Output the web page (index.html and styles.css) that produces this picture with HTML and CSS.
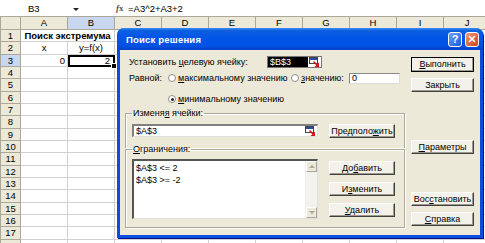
FILE: index.html
```html
<!DOCTYPE html>
<html lang="ru">
<head>
    <meta charset="UTF-8">
    <title>Поиск решения</title>
    <link rel="stylesheet" href="styles.css">
</head>
<body>
    <div class="fbar">
        <div class="namebox">B3<span class="dd"></span></div>
        <div class="fx"><i>f</i>x</div>
        <div class="formula">=A3^2+A3+2</div>
    </div>

    <div class="sheet-wrap">
    <table class="sheet">
        <colgroup><col class="rh"><col span="10" class="c"></colgroup>
        <tr class="colhead"><th></th><th>A</th><th class="sel">B</th><th>C</th><th>D</th><th>E</th><th>F</th><th>G</th><th>H</th><th>I</th><th>J</th></tr>
        <tr><th>1</th><td colspan="2" class="bold">Поиск экстремума</td><td></td><td></td><td></td><td></td><td></td><td></td><td></td><td></td></tr>
        <tr><th>2</th><td class="mid">x</td><td class="mid">y=f(x)</td><td></td><td></td><td></td><td></td><td></td><td></td><td></td><td></td></tr>
        <tr><th class="sel">3</th><td class="num">0</td><td class="num active">2<span class="handle"></span></td><td></td><td></td><td></td><td></td><td></td><td></td><td></td><td></td></tr>
        <tr><th>4</th><td></td><td></td><td></td><td></td><td></td><td></td><td></td><td></td><td></td><td></td></tr>
        <tr><th>5</th><td></td><td></td><td></td><td></td><td></td><td></td><td></td><td></td><td></td><td></td></tr>
        <tr><th>6</th><td></td><td></td><td></td><td></td><td></td><td></td><td></td><td></td><td></td><td></td></tr>
        <tr><th>7</th><td></td><td></td><td></td><td></td><td></td><td></td><td></td><td></td><td></td><td></td></tr>
        <tr><th>8</th><td></td><td></td><td></td><td></td><td></td><td></td><td></td><td></td><td></td><td></td></tr>
        <tr><th>9</th><td></td><td></td><td></td><td></td><td></td><td></td><td></td><td></td><td></td><td></td></tr>
        <tr><th>10</th><td></td><td></td><td></td><td></td><td></td><td></td><td></td><td></td><td></td><td></td></tr>
        <tr><th>11</th><td></td><td></td><td></td><td></td><td></td><td></td><td></td><td></td><td></td><td></td></tr>
        <tr><th>12</th><td></td><td></td><td></td><td></td><td></td><td></td><td></td><td></td><td></td><td></td></tr>
        <tr><th>13</th><td></td><td></td><td></td><td></td><td></td><td></td><td></td><td></td><td></td><td></td></tr>
        <tr><th>14</th><td></td><td></td><td></td><td></td><td></td><td></td><td></td><td></td><td></td><td></td></tr>
        <tr><th>15</th><td></td><td></td><td></td><td></td><td></td><td></td><td></td><td></td><td></td><td></td></tr>
        <tr><th>16</th><td></td><td></td><td></td><td></td><td></td><td></td><td></td><td></td><td></td><td></td></tr>
        <tr><th>17</th><td></td><td></td><td></td><td></td><td></td><td></td><td></td><td></td><td></td><td></td></tr>
        <tr><th></th><td></td><td></td><td></td><td></td><td></td><td></td><td></td><td></td><td></td><td></td></tr>
    </table>
    </div>

    <div class="dialog">
        <div class="titlebar">
            <span class="title">Поиск решения</span>
            <span class="tb-btn help">?</span>
            <span class="tb-btn close">
                <svg width="8" height="8" viewBox="0 0 8 8"><path d="M1 1 L7 7 M7 1 L1 7" stroke="#fff" stroke-width="1.6"/></svg>
            </span>
        </div>

        <div class="dlg-body">
            <div class="main">
                <div class="row">
                    <span class="lbl target-lbl">Установить <u>ц</u>елевую ячейку:</span>
                    <span class="refedit target">
                        <span class="val selected">$B$3</span>
                        <svg class="ref-icon" width="11" height="10" viewBox="0 0 11 10"><rect x="0.5" y="0.5" width="8" height="6" fill="#fff" stroke="#444"/><rect x="1" y="1" width="7" height="2" fill="#2a4aa8"/><path d="M4.5 4.5 L8.5 8.5" stroke="#e01010" stroke-width="1.4"/><path d="M10 5.5 V10 H5.5 Z" fill="#e01010"/></svg>
                    </span>
                </div>

                <div class="row eq">
                    <span class="lbl eq-lbl">Равной:</span>
                    <span class="opt opt-max"><span class="radio"></span><span><u>м</u>аксимальному значению</span></span>
                    <span class="opt opt-val"><span class="radio"></span><span><u>з</u>начению:</span></span>
                    <span class="field value">0</span>
                </div>

                <div class="row min">
                    <span class="opt"><span class="radio on"></span><span><u>м</u>инимальному значению</span></span>
                </div>

                <fieldset class="group changing">
                    <legend>Изменя<u>я</u> ячейки:</legend>
                    <div class="group-row">
                        <span class="refedit cells">
                            <span class="val">$A$3</span>
                            <svg class="ref-icon" width="11" height="10" viewBox="0 0 11 10"><rect x="0.5" y="0.5" width="8" height="6" fill="#fff" stroke="#444"/><rect x="1" y="1" width="7" height="2" fill="#2a4aa8"/><path d="M4.5 4.5 L8.5 8.5" stroke="#e01010" stroke-width="1.4"/><path d="M10 5.5 V10 H5.5 Z" fill="#e01010"/></svg>
                        </span>
                        <button class="btn mid-btn">Предполо<u>ж</u>ить</button>
                    </div>
                </fieldset>

                <fieldset class="group limits">
                    <legend><u>О</u>граничения:</legend>
                    <div class="group-row">
                        <div class="listbox">
                            <div class="items">
                                <div>$A$3 &lt;= 2</div>
                                <div>$A$3 &gt;= -2</div>
                            </div>
                            <div class="scroll">
                                <span class="arrow up"></span>
                                <span class="arrow down"></span>
                            </div>
                        </div>
                        <div class="mid-col">
                            <button class="btn mid-btn">До<u>б</u>авить</button>
                            <button class="btn mid-btn">И<u>з</u>менить</button>
                            <button class="btn mid-btn"><u>У</u>далить</button>
                        </div>
                    </div>
                </fieldset>
            </div>

            <div class="side">
                <button class="btn default run"><u>В</u>ыполнить</button>
                <button class="btn close-btn">Закрыть</button>
                <button class="btn params"><u>П</u>араметры</button>
                <button class="btn restore">Вос<u>с</u>тановить</button>
                <button class="btn help-btn"><u>С</u>правка</button>
            </div>
        </div>
    </div>
</body>
</html>
```

FILE: styles.css
```css
body {
    margin: 0;
    width: 485px;
    height: 243px;
    overflow: hidden;
    position: relative;
    background: #fff;
    font-family: "Liberation Sans", Arial, sans-serif;
    font-size: 9.5px;
    color: #000;
}

/* formula bar */

.fbar {
    display: flex;
    align-items: center;
    height: 16px;
    background: #fff;
}

.namebox {
    width: 82px;
    display: flex;
    align-items: center;
    padding-left: 28px;
    box-sizing: border-box;
    position: relative;
}

.dd {
    position: absolute;
    left: 73px;
    top: 5px;
    border-left: 3px solid transparent;
    border-right: 3px solid transparent;
    border-top: 3px solid #222;
}

.fx {
    margin-left: 34px;
    width: 12px;
    font-family: "Liberation Serif", serif;
    font-size: 9px;
    font-weight: bold;
    color: #555;
}

/* sheet */

.sheet-wrap {
    height: 227px;
    overflow: hidden;
}

.sheet {
    border-collapse: collapse;
    table-layout: fixed;
    width: 490px;
}

.sheet col.rh {
    width: 20px;
}

.sheet col.c {
    width: 47px;
}

.sheet tr {
    height: 12px;
}

/* rows are 12.4px in the original, so every third one is a pixel taller */
.sheet tr:nth-child(3n) {
    height: 13px;
}

.sheet tr.colhead {
    height: 13px;
}

.sheet th,
.sheet td {
    padding: 0 2px;
    line-height: 10px;
    font-size: 9.5px;
    white-space: nowrap;
    overflow: visible;
}

.sheet th {
    font-weight: normal;
    background: #ece9d8;
    border: 1px solid #aca899;
    text-align: center;
}

.sheet th.sel {
    background: #c9d6ef;
}

.sheet td {
    border: 1px solid #d0d0d0;
}

.sheet td.bold {
    font-weight: bold;
    text-align: center;
}

.sheet td.mid {
    text-align: center;
}

.sheet td.num {
    text-align: right;
}

.sheet td.active {
    position: relative;
    outline: 2px solid #000;
    outline-offset: -2px;
    padding-right: 4px;
}

.handle {
    position: absolute;
    right: -3px;
    bottom: -3px;
    width: 4px;
    height: 4px;
    background: #000;
    border: 1px solid #fff;
}

/* dialog */

.dialog {
    position: absolute;
    left: 117px;
    top: 28px;
    width: 366px;
    height: 210px;
    box-sizing: border-box;
    border: 3px solid #0a4ddf;
    border-top: 0;
    border-radius: 7px 7px 0 0;
    background: #ece9d8;
    box-shadow: 1px 1px 0 #00148c;
    font-size: 9px;
}

.titlebar {
    height: 22px;
    margin: 0 -3px;
    padding: 0 4px 0 9px;
    display: flex;
    align-items: center;
    gap: 3px;
    border-radius: 7px 7px 0 0;
    background: linear-gradient(#3d8ef8 0%, #0b5fe0 12%, #0055e8 45%, #0052e3 80%, #0241c8 100%);
}

.title {
    flex: 1;
    color: #fff;
    font-weight: bold;
    font-size: 9.5px;
    letter-spacing: 0.2px;
}

.tb-btn {
    width: 12px;
    height: 13px;
    border: 1px solid #fff;
    border-radius: 3px;
    display: flex;
    align-items: center;
    justify-content: center;
    color: #fff;
    font-weight: bold;
    font-size: 11px;
}

.tb-btn.help {
    background: linear-gradient(135deg, #6aa2fa, #1a57e0);
}

.tb-btn.close {
    background: linear-gradient(135deg, #ef9a78, #d2401c);
}

.dlg-body {
    display: grid;
    grid-template-columns: 280px 63px;
    column-gap: 6px;
    padding: 6px 6px 0 5px;
}

.row {
    display: flex;
    align-items: center;
    height: 12px;
}

.lbl {
    box-sizing: border-box;
    padding-left: 4px;
}

.target-lbl {
    width: 142px;
}

.refedit {
    display: flex;
    align-items: center;
    box-sizing: border-box;
    background: #fff;
    border: 1px solid #7f9db9;
}

.refedit .val {
    flex: 1;
    padding-left: 2px;
    line-height: 10px;
}

.refedit .val.selected {
    background: #000;
    color: #fff;
}

.refedit.target {
    width: 55px;
    height: 12px;
    border-color: #777;
}

.ref-icon {
    flex: none;
    margin: 0 1px;
}

.row.eq {
    margin-top: 4px;
}

.eq-lbl {
    width: 43px;
}

.opt {
    display: flex;
    align-items: center;
    gap: 2px;
}

.opt-max {
    width: 123px;
}

.opt-val {
    width: 58px;
}

.radio {
    width: 8px;
    height: 8px;
    box-sizing: border-box;
    border-radius: 50%;
    border: 1px solid #8d8d8d;
    background: #fff;
    display: flex;
    align-items: center;
    justify-content: center;
}

.radio.on::after {
    content: "";
    width: 3px;
    height: 3px;
    border-radius: 50%;
    background: #222;
}

.field.value {
    width: 51px;
    height: 11px;
    box-sizing: border-box;
    border: 1px solid #888;
    border-right-color: #ddd;
    border-bottom-color: #ddd;
    background: #fff;
    padding-left: 2px;
    line-height: 9px;
}

.row.min {
    margin-top: 9px;
    padding-left: 43px;
}

.group {
    margin: 3px 0 0;
    padding: 6px 5px 10px 6px;
    border: 1px solid #aca899;
    box-shadow: inset 1px 1px 0 #fff, 1px 1px 0 #fff;
}

.group legend {
    padding: 0 1px;
    line-height: 10px;
}

.group.changing {
    border-bottom: 0;
    height: 40px;
    box-sizing: border-box;
}

.group.limits {
    margin-top: -4px;
    padding-top: 5px;
    padding-bottom: 0;
    height: 84px;
    box-sizing: border-box;
}

.group-row {
    display: flex;
    align-items: flex-start;
    gap: 11px;
}

.refedit.cells {
    width: 186px;
    height: 13px;
    border-color: #808080 #e0e0e0 #e0e0e0 #808080;
    border-width: 2px 1px 1px 2px;
    border-style: solid;
}

.listbox {
    width: 186px;
    height: 60px;
    box-sizing: border-box;
    display: flex;
    background: #fff;
    border-style: solid;
    border-width: 2px 1px 1px 2px;
    border-color: #555 #e0e0e0 #e0e0e0 #555;
}

.listbox .items {
    flex: 1;
    padding: 1px 2px;
    line-height: 12px;
}

.scroll {
    width: 11px;
    display: flex;
    flex-direction: column;
    justify-content: space-between;
    background: #f3f2ee;
    border-left: 1px solid #eee;
}

.arrow {
    height: 11px;
    background: #ece9d8;
    border: 1px solid;
    border-color: #fff #aca899 #aca899 #fff;
    box-sizing: border-box;
    position: relative;
}

.arrow::after {
    content: "";
    position: absolute;
    left: 2px;
    top: 3px;
    border-left: 3px solid transparent;
    border-right: 3px solid transparent;
}

.arrow.up::after {
    border-bottom: 3px solid #aca899;
}

.arrow.down::after {
    border-top: 3px solid #aca899;
}

.mid-col {
    display: flex;
    flex-direction: column;
    gap: 7px;
    padding-top: 2px;
}

.btn {
    display: block;
    box-sizing: border-box;
    height: 14px;
    padding: 0;
    font-family: inherit;
    font-size: 9px;
    line-height: 11px;
    color: #000;
    text-align: center;
    background: #f2f1ea;
    border: 1px solid;
    border-color: #fff #404040 #404040 #fff;
    box-shadow: inset -1px -1px 0 #9d9a8c;
}

.mid-btn {
    width: 66px;
}

.side {
    display: flex;
    flex-direction: column;
}

.side .btn {
    width: 63px;
}

.btn.default {
    height: 15px;
    margin-top: 1px;
    outline: 1px solid #000;
    outline-offset: -1px;
}

.close-btn {
    margin-top: 6px;
}

.params {
    margin-top: 48px;
}

.restore {
    margin-top: 38px;
}

.help-btn {
    margin-top: 6px;
}
```
